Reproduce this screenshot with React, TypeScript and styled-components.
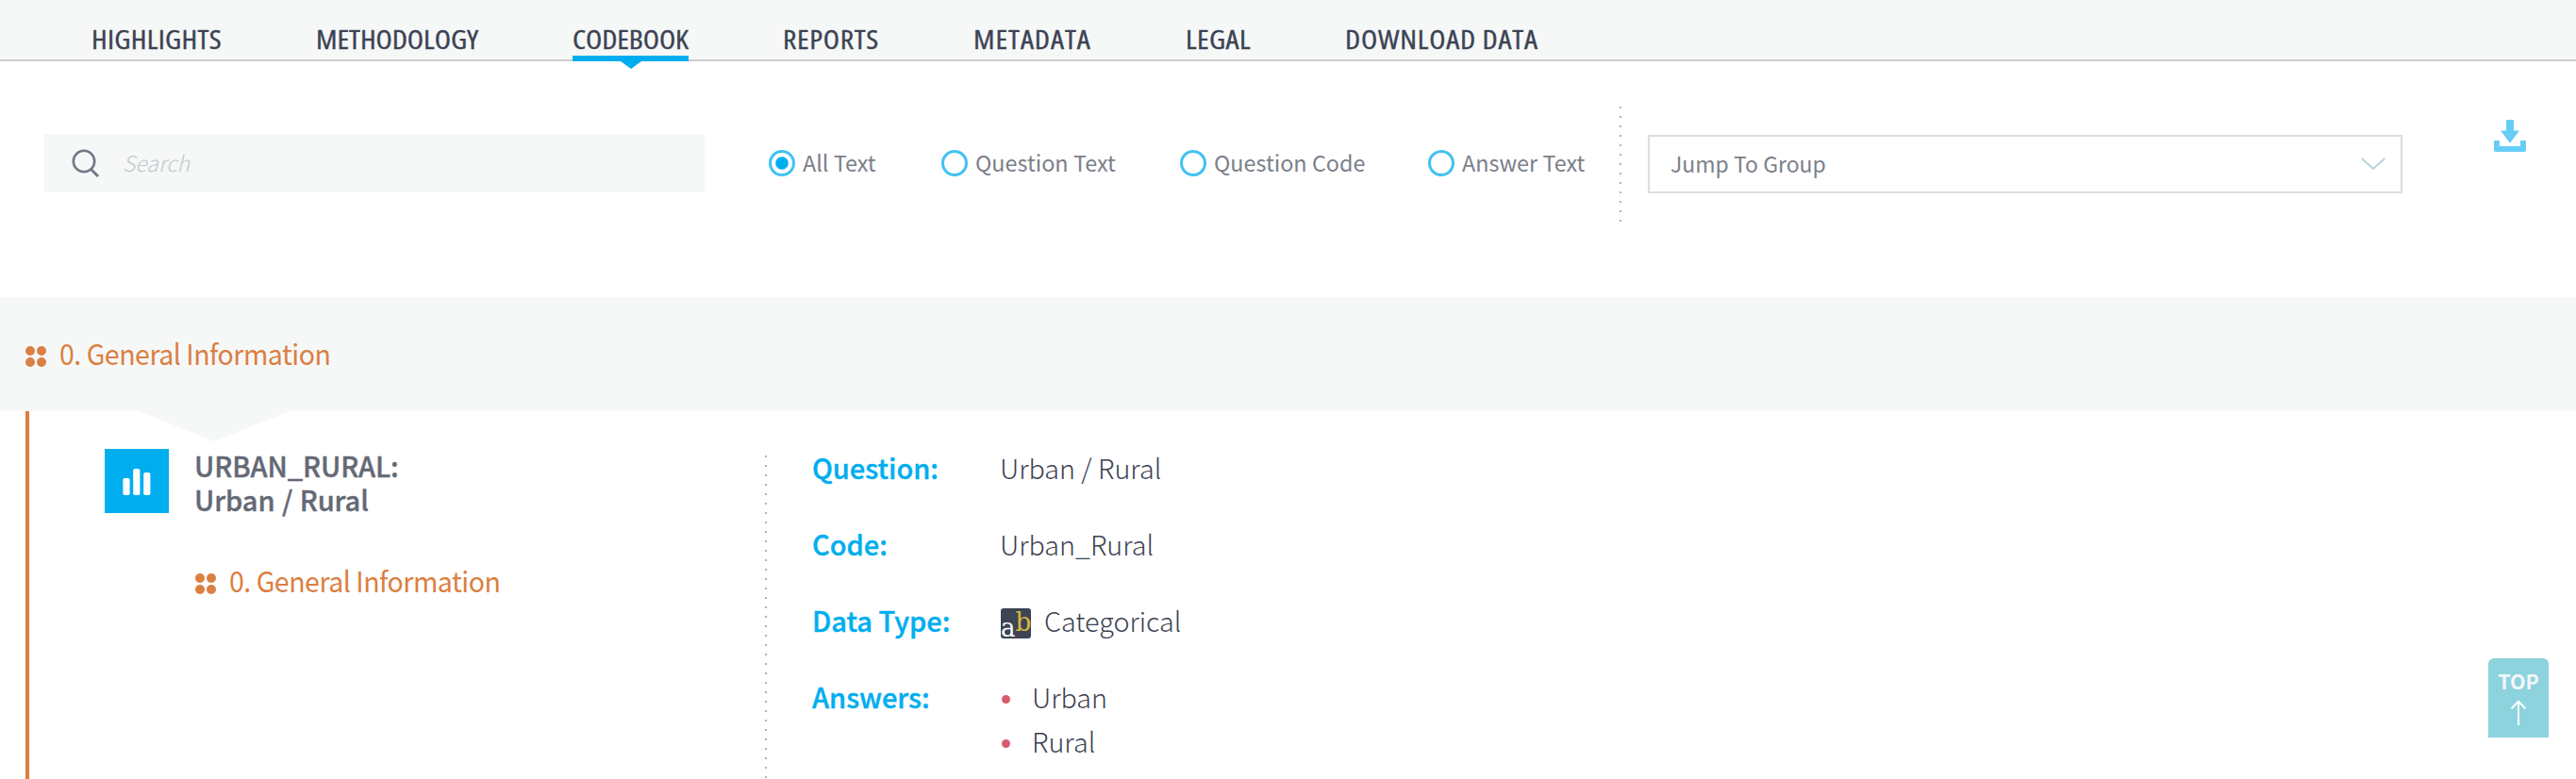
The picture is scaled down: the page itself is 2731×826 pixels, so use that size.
import React from "react";
import styled, { createGlobalStyle } from "styled-components";

const GlobalStyle = createGlobalStyle`
  * { box-sizing: border-box; }
  body { margin: 0; background: #fff; font-family: "Noto Sans CJK SC", "Open Sans", sans-serif; }
`;

const Page = styled.div`
  position: relative;
  display: flex;
  flex-direction: column;
  width: 100%;
  height: 826px;
  overflow: hidden;
`;

const Nav = styled.nav`
  display: flex;
  flex: none;
  gap: 100px;
  height: 65px;
  padding-left: 97px;
  background: #f6f8f7;
  border-bottom: 2px solid #cccecd;
`;

const NavItem = styled.a<{ $width: number; $active?: boolean }>`
  position: relative;
  flex: none;
  width: ${(p) => p.$width}px;
  height: 65px;
  padding-top: 23px;
  border-bottom: 6px solid ${(p) => (p.$active ? "#00aeef" : "transparent")};
  color: #3c4354;

  ${(p) =>
    p.$active &&
    `&::after {
      content: "";
      position: absolute;
      top: 65px;
      left: 50%;
      margin-left: -11px;
      border: solid transparent;
      border-width: 8px 11px 0;
      border-top-color: #00aeef;
    }`}
`;

const NavLabel = styled.span<{ $spacing: number }>`
  display: inline-block;
  font: 500 28px/36px "Open Sans", sans-serif;
  font-stretch: 75%;
  letter-spacing: ${(p) => p.$spacing}px;
  white-space: nowrap;
  -webkit-text-stroke: 0.35px;
  transform: scaleX(1.13);
  transform-origin: 0 50%;
`;

const Toolbar = styled.section`
  display: flex;
  flex: none;
  align-items: flex-start;
  height: 250px;
  padding: 48px 53px 0 47px;
`;

const SearchBox = styled.label`
  display: flex;
  align-items: center;
  width: 700px;
  height: 62px;
  margin-top: 29px;
  padding-left: 29px;
  gap: 24px;
  background: #f6f8f7;
`;

const SearchInput = styled.input`
  width: 500px;
  height: 60px;
  padding: 0 0 2px;
  border: 0;
  outline: 0;
  background: none;
  font: italic 300 23px "Noto Sans CJK SC", sans-serif;
  &::placeholder { color: #c3c8ce; opacity: 1; }
`;

const Radios = styled.div`
  display: flex;
  width: 970px;
  height: 28px;
  margin-top: 46px;
  padding-left: 68px;
`;

const Radio = styled.label<{ $width: number }>`
  display: flex;
  flex: none;
  align-items: center;
  gap: 8px;
  width: ${(p) => p.$width}px;
  color: #7b808a;
  font-size: 23.4px;
  line-height: 28px;
  white-space: nowrap;
`;

const RadioLabel = styled.span`
  padding-bottom: 2px;
`;

const RadioMark = styled.span<{ $checked?: boolean }>`
  flex: none;
  width: 28px;
  height: 28px;
  border: 3px solid #42c2f3;
  border-radius: 50%;
  background: ${(p) => (p.$checked ? "radial-gradient(circle, #00aeef 6px, #fff 7.5px)" : "#fff")};
`;

const DottedLine = styled.div`
  flex: none;
  width: 2px;
  background: repeating-linear-gradient(#b2b2b2 0 2px, transparent 2px 10px);
`;

const ToolbarDivider = styled(DottedLine)`
  height: 122px;
`;

const Select = styled.div`
  display: flex;
  align-items: center;
  justify-content: space-between;
  width: 800px;
  height: 62px;
  margin: 30px 0 0 28px;
  padding: 0 16px 0 22px;
  border: 2px solid #dcdddd;
  color: #7b808a;
  font-size: 23px;
  line-height: 30px;
`;

const SelectLabel = styled.span`
  padding-bottom: 2px;
`;

const DownloadButton = styled.a`
  display: block;
  height: 34px;
  margin: 14px 0 0 auto;
`;

const GroupBand = styled.section`
  position: relative;
  flex: none;
  height: 121px;
  padding: 41px 0 0 27px;
  background: #f6f8f8;

  &::after {
    content: "";
    position: absolute;
    top: 121px;
    left: 147px;
    border: solid transparent;
    border-width: 32px 80px 0;
    border-top-color: #f6f8f8;
  }
`;

const GroupLink = styled.a`
  display: flex;
  align-items: center;
  gap: 14px;
  color: #db7f42;
  font-size: 30px;
  line-height: 36px;
  white-space: nowrap;

  svg { margin-top: 8px; }
`;

const GroupName = styled.span`
  letter-spacing: -0.5px;
  transform: scaleX(0.95);
  transform-origin: 0 50%;
`;

const Entry = styled.section`
  display: flex;
  flex: 1;
  align-items: flex-start;
  margin-left: 27px;
  border-left: 4px solid #db7f42;
`;

const Summary = styled.div`
  display: flex;
  flex: none;
  align-items: flex-start;
  width: 780px;
  padding: 39px 0 0 80px;
`;

const ChartTile = styled.a`
  display: flex;
  flex: none;
  align-items: center;
  justify-content: center;
  width: 68px;
  height: 68px;
  margin-top: 1px;
  padding-top: 2px;
  background: #00aeef;
`;

const SummaryText = styled.div`
  margin-left: 27px;
`;

const Title = styled.h3`
  margin: 0 0 50px;
  color: #636975;
  font-size: 29px;
  font-weight: 500;
  line-height: 36px;
  letter-spacing: -0.05px;
  word-spacing: 1px;
  -webkit-text-stroke: 0.4px;
`;

const SummaryGroup = styled(GroupLink)`
  margin-left: 1px;
`;

const EntryDivider = styled(DottedLine)`
  height: 343px;
  margin-top: 47px;
`;

const Details = styled.dl`
  display: grid;
  grid-template-columns: 199px auto;
  row-gap: 34px;
  margin: 36px 0 0 48px;
  font-size: 29px;
  line-height: 47px;
  white-space: nowrap;
`;

const Term = styled.dt`
  color: #00aeef;
  font-weight: 500;
  -webkit-text-stroke: 0.4px;
`;

const Value = styled.dd`
  display: flex;
  align-items: center;
  margin: 0;
  color: #3c4252;
  font-size: 28.7px;
  font-weight: 300;

  svg { margin: 6px 14px 0 1px; }
`;

const Answers = styled.ul`
  margin: 0;
  padding: 0;
  list-style: none;
`;

const Answer = styled.li`
  display: flex;
  align-items: center;
  gap: 23px;

  &::before {
    content: "";
    width: 9px;
    height: 9px;
    margin: 6px 0 0 2px;
    border-radius: 50%;
    background: #d95c6e;
  }
`;

const TopButton = styled.a`
  position: absolute;
  right: 29px;
  bottom: 44px;
  display: flex;
  flex-direction: column;
  align-items: center;
  width: 64px;
  height: 84px;
  padding-top: 12px;
  border-radius: 6px 6px 0 0;
  background: #8dd3dd;
  color: #f3f8f9;
  font-size: 21.5px;
  font-weight: 700;
  line-height: 24px;

  svg { margin-top: 8px; }
`;

const SearchIcon = () => (
  <svg width="30" height="30" viewBox="0 0 30 30" fill="none" stroke="#717986">
    <circle cx="13" cy="13" r="11.2" strokeWidth="2.6" />
    <path d="M20.5 21.5 28 29" strokeWidth="3" />
  </svg>
);

const ChevronIcon = () => (
  <svg width="26" height="14" viewBox="0 0 26 14" fill="none" stroke="#b9d4dc" strokeWidth="2">
    <path d="M0.7 1 13 11.8 25.3 1" />
  </svg>
);

const DownloadIcon = () => (
  <svg width="34" height="34" viewBox="0 0 34 34" fill="#66cdf6">
    <path d="M13 1.3Q13 0 14.3 0H19.7Q21 0 21 1.3V11.5H27L17 24.8 7 11.5H13Z" />
    <path d="M1 22H6V28H28V22H33Q34 22 34 23V32Q34 34 32 34H2Q0 34 0 32V23Q0 22 1 22Z" />
  </svg>
);

const DotsIcon = () => (
  <svg width="22" height="22" viewBox="0 0 22 22" fill="#db7f42">
    <circle cx="5" cy="5" r="5" />
    <circle cx="17" cy="5" r="5" />
    <circle cx="5" cy="17" r="5" />
    <circle cx="17" cy="17" r="5" />
  </svg>
);

const BarsIcon = () => (
  <svg width="30" height="28" viewBox="0 0 30 28" fill="#fff">
    <rect x="0.4" y="10" width="7.2" height="18" rx="1.8" />
    <rect x="11.2" y="0" width="7.2" height="28" rx="1.8" />
    <rect x="22.2" y="4" width="7.2" height="24" rx="1.8" />
  </svg>
);

const CategoricalIcon = () => (
  <svg width="32" height="32" viewBox="0 0 32 32" fontFamily="DejaVu Serif, serif">
    <rect width="32" height="32" rx="3" fill="#3d4454" />
    <text x="0" y="30" fontSize="28" fill="#fff" textLength="15.5" lengthAdjust="spacingAndGlyphs">a</text>
    <text x="15.5" y="23.5" fontSize="28" fill="#d8b843" textLength="16.8" lengthAdjust="spacingAndGlyphs">b</text>
  </svg>
);

const ArrowUpIcon = () => (
  <svg width="16" height="27" viewBox="0 0 16 27" fill="none" stroke="#fff" strokeWidth="2">
    <path d="M8 27V1.5M0.7 9.3 8 1.7 15.3 9.3" />
  </svg>
);

const tabs = [
  { label: "HIGHLIGHTS", width: 138, spacing: 0.26 },
  { label: "METHODOLOGY", width: 172, spacing: -0.04 },
  { label: "CODEBOOK", width: 123, spacing: -0.05, active: true },
  { label: "REPORTS", width: 102, spacing: 0.56 },
  { label: "METADATA", width: 125, spacing: 0.85 },
  { label: "LEGAL", width: 69, spacing: 0.35 },
  { label: "DOWNLOAD DATA", width: 205, spacing: 0.68 },
];

const scopes = [
  { label: "All Text", width: 183, checked: true },
  { label: "Question Text", width: 253 },
  { label: "Question Code", width: 263 },
  { label: "Answer Text", width: 180 },
];

export default function App() {
  return (
    <>
      <GlobalStyle />
      <Page>
        <Nav>
          {tabs.map((t) => (
            <NavItem key={t.label} $width={t.width} $active={t.active}>
              <NavLabel $spacing={t.spacing}>{t.label}</NavLabel>
            </NavItem>
          ))}
        </Nav>
        <Toolbar>
          <SearchBox><SearchIcon /><SearchInput placeholder="Search" /></SearchBox>
          <Radios>
            {scopes.map((s) => (
              <Radio key={s.label} $width={s.width}>
                <RadioMark $checked={s.checked} />
                <RadioLabel>{s.label}</RadioLabel>
              </Radio>
            ))}
          </Radios>
          <ToolbarDivider />
          <Select><SelectLabel>Jump To Group</SelectLabel><ChevronIcon /></Select>
          <DownloadButton><DownloadIcon /></DownloadButton>
        </Toolbar>
        <GroupBand>
          <GroupLink><DotsIcon /><GroupName>0. General Information</GroupName></GroupLink>
        </GroupBand>
        <Entry>
          <Summary>
            <ChartTile><BarsIcon /></ChartTile>
            <SummaryText>
              <Title>URBAN_RURAL:<br />Urban / Rural</Title>
              <SummaryGroup><DotsIcon /><GroupName>0. General Information</GroupName></SummaryGroup>
            </SummaryText>
          </Summary>
          <EntryDivider />
          <Details>
            <Term>Question:</Term><Value>Urban / Rural</Value>
            <Term>Code:</Term><Value>Urban_Rural</Value>
            <Term>Data Type:</Term><Value><CategoricalIcon />Categorical</Value>
            <Term>Answers:</Term>
            <Value><Answers><Answer>Urban</Answer><Answer>Rural</Answer></Answers></Value>
          </Details>
        </Entry>
        <TopButton>TOP<ArrowUpIcon /></TopButton>
      </Page>
    </>
  );
}
